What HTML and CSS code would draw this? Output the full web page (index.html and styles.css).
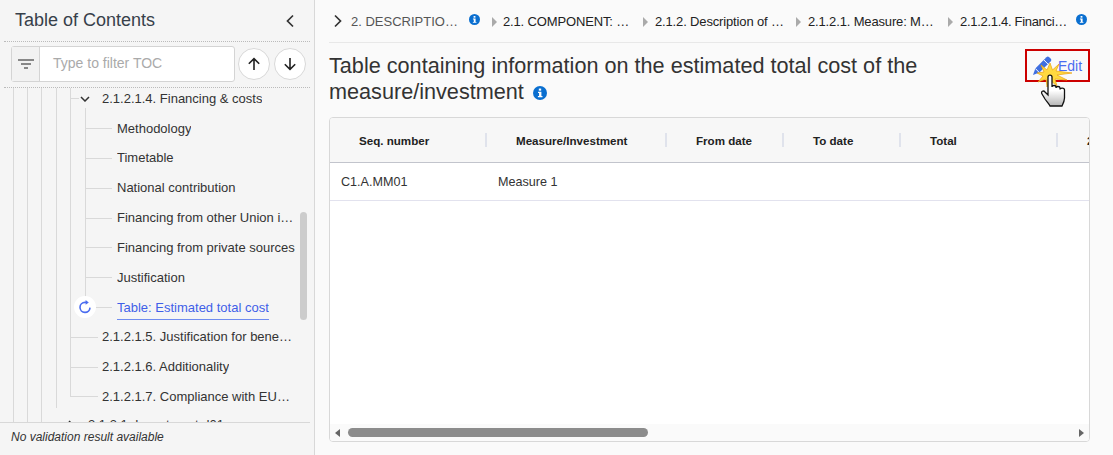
FILE: index.html
```html
<!DOCTYPE html>
<html lang="en">
<head>
<meta charset="utf-8">
<title>Table of Contents</title>
<link rel="stylesheet" href="styles.css">
</head>
<body>
<div class="app">
  <aside class="side">
    <header class="side-head">
      <h2 class="side-title">Table of Contents</h2>
      <svg class="collapse" width="10" height="14" viewBox="0 0 10 14"><path d="M8 1.5 2.5 7 8 12.5" fill="none" stroke="#333" stroke-width="1.7"/></svg>
    </header>
    <div class="filter-row">
      <div class="filter">
        <span class="filter-btn">
          <svg width="16" height="10" viewBox="0 0 16 10"><path d="M0 1h16M3 5h10M6 9h4" stroke="#666" stroke-width="1.5" fill="none"/></svg>
        </span>
        <span class="filter-input">Type to filter TOC</span>
      </div>
      <span class="round">
        <svg width="14" height="14" viewBox="0 0 14 14"><path d="M7 13V1.6M1.8 6.8 7 1.6l5.2 5.2" fill="none" stroke="#222" stroke-width="1.6"/></svg>
      </span>
      <span class="round">
        <svg width="14" height="14" viewBox="0 0 14 14"><path d="M7 1v11.4M1.8 7.2 7 12.4l5.2-5.2" fill="none" stroke="#222" stroke-width="1.6"/></svg>
      </span>
    </div>
    <div class="tree">
      <div class="lvl lvl-first">
        <div class="lvl">
          <div class="lvl">
            <div class="lvl lvl-four">
              <div class="lvl lvl-five">
                <div class="row">
                  <span class="tick tick-short"></span>
                  <svg class="chev-down" width="10" height="6" viewBox="0 0 10 6"><path d="M1 1l4 4 4-4" fill="none" stroke="#333" stroke-width="1.5"/></svg>
                  <span class="label label-parent">2.1.2.1.4. Financing &amp; costs</span>
                </div>
                <div class="lvl lvl-six">
                  <div class="row"><span class="tick tick-leaf"></span><span class="label">Methodology</span></div>
                  <div class="row"><span class="tick tick-leaf"></span><span class="label">Timetable</span></div>
                  <div class="row"><span class="tick tick-leaf"></span><span class="label">National contribution</span></div>
                  <div class="row"><span class="tick tick-leaf"></span><span class="label">Financing from other Union instruments</span></div>
                  <div class="row"><span class="tick tick-leaf"></span><span class="label">Financing from private sources</span></div>
                  <div class="row"><span class="tick tick-leaf"></span><span class="label">Justification</span></div>
                  <div class="row row-active">
                    <span class="refresh">
                      <svg width="14" height="14" viewBox="0 0 14 14"><path d="M12 7.600A5 5 0 1 1 7 2.400h2" fill="none" stroke="#4a6cf0" stroke-width="1.600"/><path d="M7.600 0 10.800 2.400 7.600 4.800z" fill="#4a6cf0"/></svg>
                    </span>
                    <span class="tick tick-leaf"></span><span class="label label-active">Table: Estimated total cost</span>
                  </div>
                </div>
                <div class="row row-long"><span class="tick tick-long"></span><span class="label">2.1.2.1.5. Justification for beneficiaries</span></div>
                <div class="row row-long"><span class="tick tick-long"></span><span class="label">2.1.2.1.6. Additionality</span></div>
                <div class="row row-long"><span class="tick tick-long"></span><span class="label">2.1.2.1.7. Compliance with EU rules</span></div>
              </div>
              <div class="row row-next">
                <span class="tick tick-gap"></span>
                <svg class="chev-right" width="6" height="10" viewBox="0 0 6 10"><path d="M1 1l4 4-4 4" fill="none" stroke="#333" stroke-width="1.5"/></svg>
                <span class="label">2.1.3.1. Investment d01</span>
              </div>
            </div>
          </div>
        </div>
      </div>
      <span class="tree-scroll"></span>
    </div>
    <footer class="side-foot">No validation result available</footer>
  </aside>
  <main class="main">
    <nav class="crumbs">
      <svg class="crumb-start" width="10" height="14" viewBox="0 0 10 14"><path d="M2 1.5 7.5 7 2 12.5" fill="none" stroke="#333" stroke-width="1.7"/></svg>
      <span class="crumb crumb-first">2. DESCRIPTION OF THE PLAN</span>
      <svg class="info info-sm" viewBox="0 0 12 12"><use href="#i"/></svg>
      <span class="sep"></span>
      <span class="crumb crumb-2">2.1. COMPONENT: Component 1</span>
      <span class="sep"></span>
      <span class="crumb crumb-3">2.1.2. Description of reforms</span>
      <span class="sep"></span>
      <span class="crumb crumb-4">2.1.2.1. Measure: Measure 1</span>
      <span class="sep"></span>
      <span class="crumb crumb-5">2.1.2.1.4. Financing &amp; costs</span>
      <svg class="info info-sm" viewBox="0 0 12 12"><use href="#i"/></svg>
    </nav>
    <div class="title-row">
      <h1 class="title">Table containing information on the estimated total cost of the measure/investment <svg class="info info-lg" viewBox="0 0 12 12"><use href="#i"/></svg></h1>
      <a class="edit">
        <svg width="20" height="20" viewBox="0 0 20 20"><path d="M14.400 1.200a2 2 0 0 1 2.800 0l1.400 1.400a2 2 0 0 1 0 2.800L7.400 16.600 1 19l2.300-6.500z" fill="#3f6fe0"/><path d="M11.800 3.900l4.200 4.200M3.300 12.500l4.100 4.100" stroke="#fff" stroke-width="1"/></svg>
        <span>Edit</span>
      </a>
      <svg class="cursor" width="40" height="46" viewBox="0 0 40 46">
        <defs><linearGradient id="g" x1="0" y1="0" x2="0" y2="1"><stop offset=".5" stop-color="#fff"/><stop offset="1" stop-color="#b5b5b5"/></linearGradient></defs>
        <path d="M15 1l2.500 7L24 2l-3 7 16 2-15 2 10 5-12-1 2 7-7-6-3 7-1-8-8 3 5-6-6-3 7-1-3-7 6 5z" fill="#ffd940" stroke="#e8a010" stroke-width=".7"/>
        <path d="M13 15c0-2.500 4-2.500 4 0V25c0-2 4-2 4 0v1c0-2 4-2 4 0v1.500c0-2 4.500-2 4.500 .5V36c0 3-1 5-2.500 8H15c-1-2-3-4-5-7l-3-5c-1.500-2.500 1.500-4 3-2l3 3z" fill="url(#g)" stroke="#111" stroke-width="1.300"/>
      </svg>
    </div>
    <section class="grid-box">
      <div class="grid-scroll">
        <table class="grid">
          <colgroup>
            <col class="c1"><col class="c2"><col class="c3"><col class="c4"><col class="c5"><col class="c6">
          </colgroup>
          <thead>
            <tr><th>Seq. number</th><th>Measure/Investment</th><th>From date</th><th>To date</th><th>Total</th><th>2021</th></tr>
          </thead>
          <tbody>
            <tr><td>C1.A.MM01</td><td>Measure 1</td><td></td><td></td><td></td><td></td></tr>
          </tbody>
        </table>
      </div>
      <div class="hbar">
        <span class="arrow-l"></span>
        <span class="thumb"></span>
        <span class="arrow-r"></span>
      </div>
    </section>
  </main>
</div>
<svg class="defs" width="0" height="0"><symbol id="i" viewBox="0 0 12 12"><circle cx="6" cy="6" r="6" fill="#0a6fd0"/><rect x="5" y="2.200" width="2" height="1.800" fill="#fff"/><path d="M4.300 5h2.900v3.600h.9v1H4.200v-1h1V6h-.9z" fill="#fff"/></symbol></svg>
</body>
</html>
```

FILE: styles.css
```css
* { box-sizing: border-box; }
html, body { margin: 0; height: 100%; }
body {
  font-family: "Liberation Sans", Arial, sans-serif;
  color: #333;
  background: #fafafa;
  overflow: hidden;
}
.defs { position: absolute; }
.app { display: flex; height: 455px; }

/* Sidebar */
.side {
  width: 315px;
  flex: none;
  background: #f5f5f5;
  border-right: 1px solid #d8d8d8;
  display: flex;
  flex-direction: column;
}
.side-head {
  height: 42px;
  margin: 0 4px;
  padding: 0 11px;
  display: flex;
  align-items: center;
  justify-content: space-between;
  border-bottom: 1px dotted #bbb;
}
.side-title { margin: 0; font-size: 18px; font-weight: 400; color: #37404a; }
.collapse { margin-right: 4px; }
.filter-row {
  height: 46px;
  margin: 0 4px;
  padding: 4px 0 0 7px;
  display: flex;
  align-items: flex-start;
  gap: 4px;
  border-bottom: 1px dotted #bbb;
}
.filter {
  width: 224px;
  height: 36px;
  display: flex;
  border: 1px solid #d4d4d4;
  border-radius: 3px;
  background: #fff;
  margin-right: -1px;
}
.filter-btn {
  width: 28px;
  flex: none;
  display: flex;
  align-items: center;
  justify-content: center;
  background: #f2f2f2;
  border-right: 1px solid #d4d4d4;
}
.filter-input { padding-left: 13px; font-size: 14px; line-height: 33px; color: #aaa; }
.round {
  width: 32px;
  height: 32px;
  margin-top: 2px;
  flex: none;
  display: flex;
  align-items: center;
  justify-content: center;
  border: 1px solid #d8d8d8;
  border-radius: 50%;
  background: #fff;
}

/* Tree */
.tree { flex: 1; min-height: 0; overflow: hidden; position: relative; padding-right: 18px; }
.lvl { position: relative; }
.lvl::before {
  content: "";
  position: absolute;
  left: 0;
  top: 0;
  bottom: 0;
  width: 1px;
  background: #d9d9d9;
}
.lvl > .lvl { margin-left: 14px; }
.lvl-first { margin: -4px 0 0 13px; padding-bottom: 30px; }
.lvl-four { margin-left: 15px !important; }
.lvl-four::before { bottom: 32px; }
.lvl-five::before { bottom: 15px; }
.lvl-six { margin-left: 15px !important; }
.lvl-six::before { top: -6px; bottom: 15px; }
.row {
  height: 29.8px;
  display: flex;
  align-items: center;
  font-size: 13px;
  color: #333;
  min-width: 0;
  position: relative;
}
.row-long { padding-right: 3px; }
.row-next { margin-top: -1.5px; }
.tick { height: 1px; background: #d9d9d9; flex: none; }
.tick-short { width: 9px; }
.tick-leaf { width: 27px; margin-right: 5px; }
.tick-long { width: 28px; margin-right: 4px; }
.tick-gap { width: 12px; }
.chev-down { flex: none; margin-left: 1px; }
.chev-right { margin-right: 14px; flex: none; }
.label-parent { margin-left: 12px; }
.label { white-space: nowrap; overflow: hidden; text-overflow: ellipsis; min-width: 0; line-height: 18px; }
.label-active {
  color: #3f5fe8;
  border-bottom: 1px solid #6f8cf0;
  line-height: 22px;
  margin-top: 2px;
}
.refresh {
  position: absolute;
  left: -11px;
  top: 3px;
  width: 22px;
  height: 22px;
  border-radius: 50%;
  background: #fff;
  display: flex;
  align-items: center;
  justify-content: center;
  z-index: 1;
}
.tree-scroll {
  position: absolute;
  left: 300px;
  top: 124px;
  width: 7px;
  height: 108px;
  border-radius: 4px;
  background: #ccc;
}
.side-foot {
  height: 33px;
  margin-right: 4px;
  padding: 7px 0 0 11px;
  border-top: 1px solid #d8d8d8;
  font-size: 12px;
  font-style: italic;
  color: #333;
}

/* Main */
.main { flex: none; width: 761px; margin-left: 14px; display: flex; flex-direction: column; }
.crumbs {
  height: 43px;
  flex: none;
  display: flex;
  align-items: center;
  border-bottom: 1px solid #e8e8e8;
  font-size: 13px;
  letter-spacing: -.15px;
  color: #222;
}
.crumb-start { margin-left: 4px; margin-right: 8px; flex: none; }
.crumb { white-space: nowrap; overflow: hidden; text-overflow: ellipsis; flex: none; }
.crumb-first { width: 111px; color: #555; letter-spacing: 0; }
.crumb-2 { width: 128px; }
.crumb-3 { width: 129px; }
.crumb-4 { width: 128px; }
.crumb-5 { width: 109px; letter-spacing: -.3px; }
.sep {
  width: 0;
  height: 0;
  flex: none;
  margin: 1px 7px 0 12px;
  border-left: 5px solid #aaa;
  border-top: 5px solid transparent;
  border-bottom: 5px solid transparent;
}
.info { display: inline-block; }
.info-sm { width: 11px; height: 11px; margin: -4px 0 0 7px; flex: none; }
.info-sm + .sep { margin-left: 12px; margin-right: 6px; }
.info-lg { width: 14px; height: 14px; margin-left: 3px; vertical-align: -1px; }
.title-row {
  height: 74px;
  flex: none;
  position: relative;
  display: flex;
  justify-content: space-between;
  align-items: flex-start;
  padding-top: 10px;
}
.title {
  margin: 0;
  width: 640px;
  font-size: 21.65px;
  font-weight: 400;
  line-height: 26px;
  color: #333;
}
.edit {
  width: 65px;
  height: 33px;
  margin-top: -4px;
  display: flex;
  align-items: center;
  gap: 6px;
  padding-left: 5px;
  border: 2px solid #c00;
  font-size: 14px;
  color: #4a6cf0;
}
.cursor { position: absolute; left: 706px; top: 19px; }

/* Table */
.grid-box {
  height: 325px;
  flex: none;
  background: #fff;
  border: 1px solid #d8d8d8;
  border-radius: 4px;
  display: flex;
  flex-direction: column;
  overflow: hidden;
}
.grid-scroll { flex: 1; min-height: 0; overflow: hidden; }
.grid { border-collapse: collapse; table-layout: fixed; width: 900px; }
.c1 { width: 157px; }
.c2 { width: 180px; }
.c3, .c4 { width: 117px; }
.c5 { width: 157px; }
.c6 { width: 172px; }
.grid th {
  height: 44px;
  padding: 2px 0 0 29px;
  background: #f7f7f7;
  border-bottom: 1px solid #c2c4cc;
  font-size: 11.6px;
  font-weight: 700;
  text-align: left;
  color: #222;
  position: relative;
}
.grid th::after {
  content: "";
  position: absolute;
  right: 0;
  top: 15px;
  width: 2px;
  height: 14px;
  background: #e0e3ec;
}
.grid th:last-child::after { display: none; }
.grid td {
  height: 38px;
  padding: 1px 0 0 11px;
  border-bottom: 1px solid #e2e2ee;
  font-size: 12.6px;
  color: #333;
}
.hbar {
  height: 17px;
  flex: none;
  background: #fafafa;
  display: flex;
  align-items: center;
  padding: 0 5px;
}
.arrow-l, .arrow-r {
  width: 0;
  height: 0;
  border-top: 4px solid transparent;
  border-bottom: 4px solid transparent;
}
.arrow-l { border-right: 5px solid #666; }
.arrow-r { border-left: 5px solid #666; margin-left: auto; }
.thumb {
  width: 300px;
  height: 9px;
  margin-left: 8px;
  border-radius: 5px;
  background: #8c8c8c;
}
```
